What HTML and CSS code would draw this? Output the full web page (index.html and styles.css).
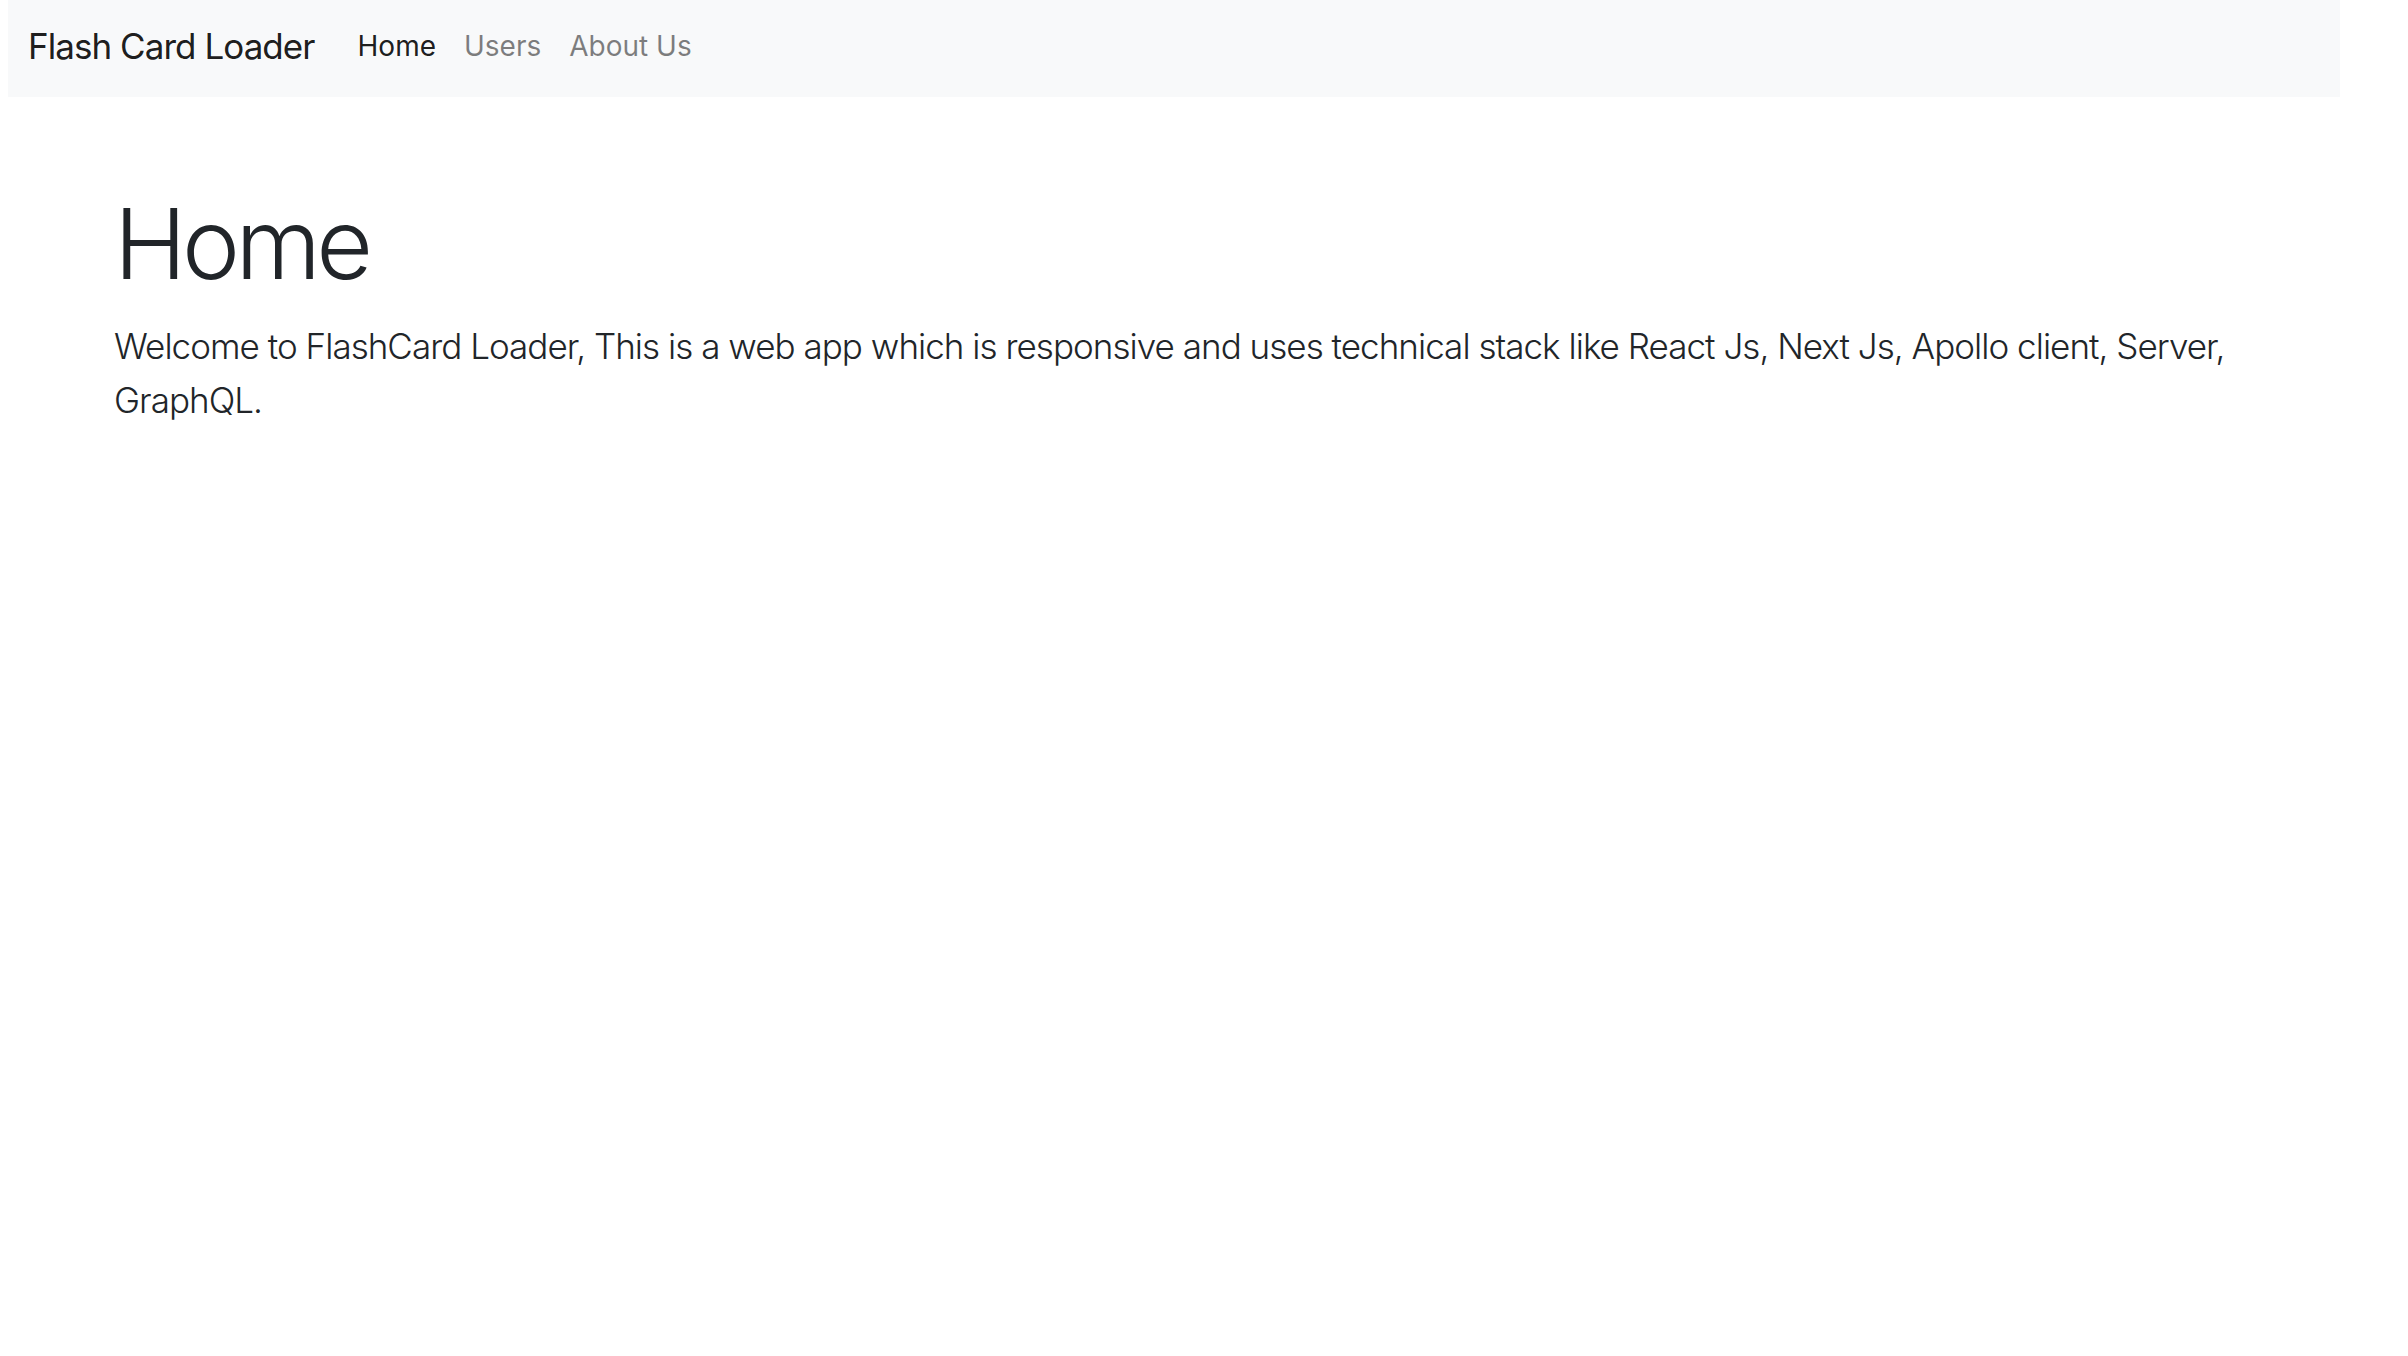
FILE: index.html
```html
<!DOCTYPE html>
<html lang="en">
<head>
<meta charset="utf-8">
<title>Flash Card Loader</title>
<link rel="stylesheet" href="styles.css">
</head>
<body>
<div class="page">
  <nav class="navbar">
    <a class="brand" href="#">Flash Card Loader</a>
    <ul class="nav">
      <li><a class="nav-link active" href="#">Home</a></li>
      <li><a class="nav-link" href="#">Users</a></li>
      <li><a class="nav-link" href="#">About Us</a></li>
    </ul>
  </nav>
  <main class="content">
    <h1 class="display">Home</h1>
    <p class="lead">Welcome to FlashCard Loader, This is a web app which is responsive and uses technical stack like React Js, Next Js, Apollo client, Server, GraphQL.</p>
  </main>
</div>
</body>
</html>
```

FILE: styles.css
```css
html, body {
  margin: 0;
  padding: 0;
  background: #ffffff;
}
body {
  font-family: Inter, "Liberation Sans", Arial, sans-serif;
  color: #212529;
}
.page {
  width: 2332px;
  margin-left: 8px;
}
.navbar {
  height: 97px;
  background: #f8f9fa;
  display: flex;
  align-items: center;
  padding: 0 20px 5px 20px;
  box-sizing: border-box;
}
.brand {
  font-size: 35px;
  color: rgba(0, 0, 0, 0.9);
  text-decoration: none;
  margin-right: 29px;
  letter-spacing: -0.95px;
}
.nav {
  display: flex;
  list-style: none;
  margin: 0;
  padding: 0;
}
.nav-link {
  display: block;
  padding: 0 14px;
  font-size: 28px;
  color: rgba(0, 0, 0, 0.5);
  text-decoration: none;
  letter-spacing: 0;
}
.nav-link.active {
  color: rgba(0, 0, 0, 0.9);
}
.content {
  padding: 0 106px;
  padding-top: 88px;
}
.display {
  margin: 0 0 16px 0;
  font-size: 98px;
  font-weight: 300;
  line-height: 1.2;
  letter-spacing: -4.6px;
}
.lead {
  margin: 0;
  font-size: 35px;
  font-weight: 300;
  line-height: 54px;
  letter-spacing: -0.97px;
}
```
